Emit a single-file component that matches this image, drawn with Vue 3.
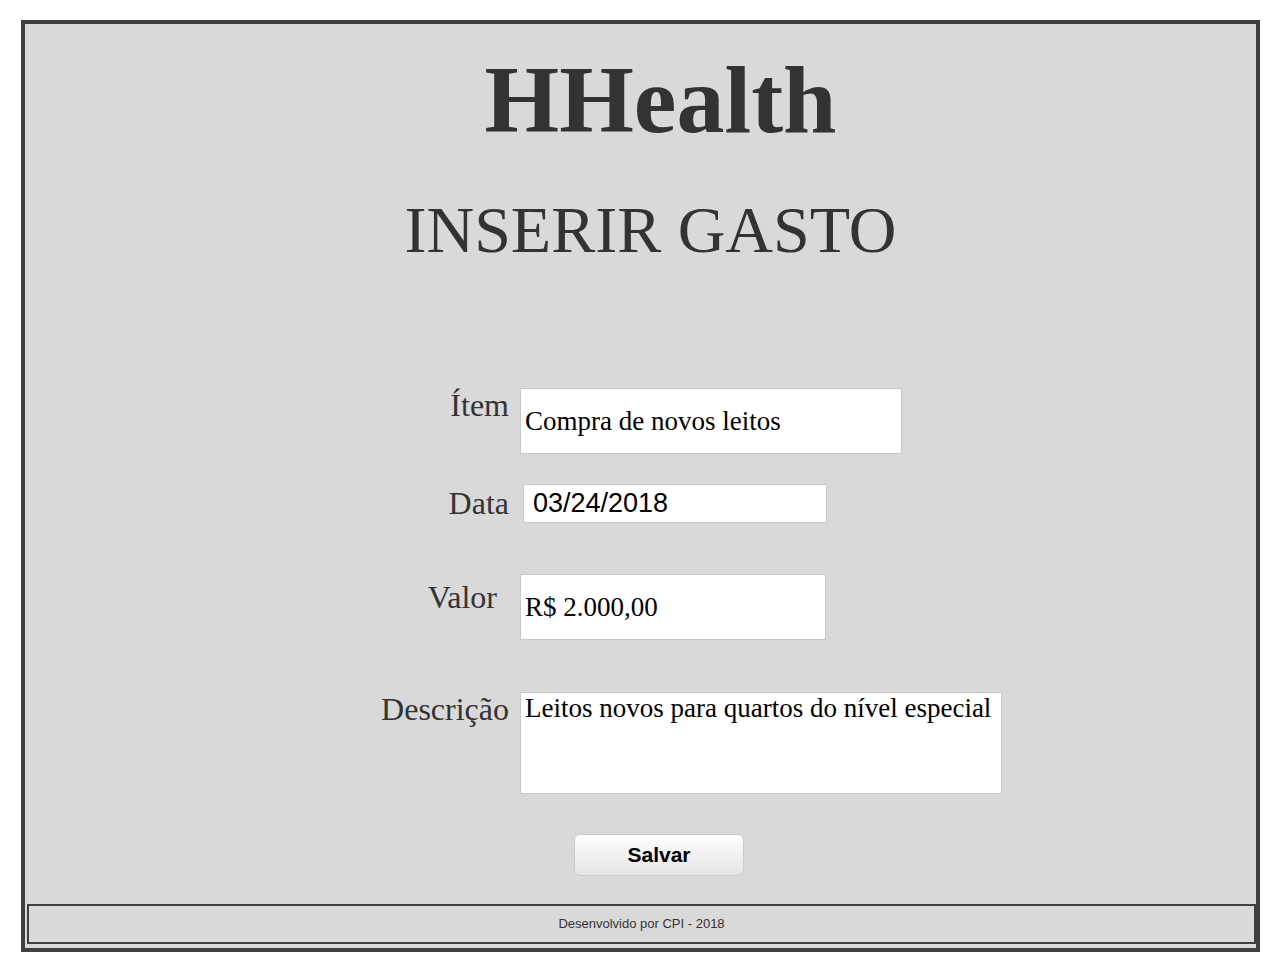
<script setup>
import { ref } from 'vue'

const item = ref('Compra de novos leitos')
const date = ref('03/24/2018')
const amount = ref('R$ 2.000,00')
const description = ref('Leitos novos para quartos do nível especial')
</script>

<template>
  <div class="page">
    <div class="frame">
      <header class="header">
        <h1 class="brand">HHealth</h1>
        <h2 class="title">INSERIR GASTO</h2>
      </header>

      <main class="content">
        <form class="form" @submit.prevent>
          <div class="row row-item">
            <label class="label" for="item">Ítem</label>
            <input id="item" v-model="item" class="field wide" type="text" />
          </div>
          <div class="row row-date">
            <label class="label" for="date">Data</label>
            <input id="date" v-model="date" class="field date" type="text" />
          </div>
          <div class="row row-amount">
            <label class="label" for="amount">Valor</label>
            <input id="amount" v-model="amount" class="field amount" type="text" />
          </div>
          <div class="row row-description">
            <label class="label" for="description">Descrição</label>
            <textarea id="description" v-model="description" class="field area"></textarea>
          </div>
          <button class="save" type="submit">Salvar</button>
        </form>
      </main>

      <footer class="footer">Desenvolvido por CPI - 2018</footer>
    </div>
  </div>
</template>

<style>
body {
  margin: 0;
  background: #fff;
}
</style>

<style scoped>
.page {
  box-sizing: border-box;
  min-height: 100vh;
  padding: 20px 20px 8px 21px;
  display: flex;
  font-family: "Liberation Serif", "Times New Roman", serif;
  color: #333;
}

.frame {
  flex: 1;
  display: flex;
  flex-direction: column;
  border: 4px solid #404040;
  background: #d9d9d9;
}

.header {
  padding-top: 22px;
  text-align: center;
}

.brand {
  margin: 0;
  padding-left: 40px;
  font-size: 96px;
  line-height: 108px;
  font-weight: bold;
}

.title {
  margin: 39px 0 0;
  padding-left: 20px;
  font-size: 66px;
  line-height: 74px;
  font-weight: normal;
}

.content {
  flex: 1;
  display: flex;
  justify-content: center;
  padding: 121px 0 28px 102px;
}

.form {
  display: flex;
  flex-direction: column;
}

.row {
  display: grid;
  grid-template-columns: 128px 482px;
  column-gap: 11px;
  align-items: start;
}

.row-date {
  margin-top: 30px;
}

.row-amount {
  margin-top: 51px;
}

.row-description {
  margin-top: 52px;
}

.label {
  font-size: 32px;
  line-height: 34px;
  text-align: right;
}

.row-date .label {
  padding-top: 2px;
}

.row-amount .label {
  padding: 6px 12px 0 0;
}

.field {
  box-sizing: border-box;
  margin: 0;
  padding: 0 0 0 4px;
  border: 1px solid #c8c8c8;
  border-radius: 0;
  outline: none;
  background: #fff;
  color: #000;
  font-family: inherit;
  font-size: 27px;
  line-height: 30px;
}

.wide {
  width: 382px;
  height: 66px;
}

.date {
  width: 304px;
  height: 39px;
  margin-left: 3px;
  padding-left: 9px;
  font-family: "Liberation Sans", Arial, sans-serif;
}

.amount {
  width: 306px;
  height: 66px;
}

.area {
  width: 482px;
  height: 102px;
  resize: none;
  overflow: hidden;
}

.save {
  width: 170px;
  height: 42px;
  margin: 40px 0 0 193px;
  padding: 0;
  border: 1px solid #ccc;
  border-radius: 6px;
  background: linear-gradient(#fff, #e4e4e4);
  color: #000;
  font-family: "Liberation Sans", Arial, sans-serif;
  font-size: 21px;
  font-weight: bold;
}

.footer {
  box-sizing: border-box;
  height: 40px;
  margin: 0 0 4px 2px;
  border: 2px solid #404040;
  font-family: "Liberation Sans", Arial, sans-serif;
  font-size: 13px;
  line-height: 36px;
  text-align: center;
}
</style>
